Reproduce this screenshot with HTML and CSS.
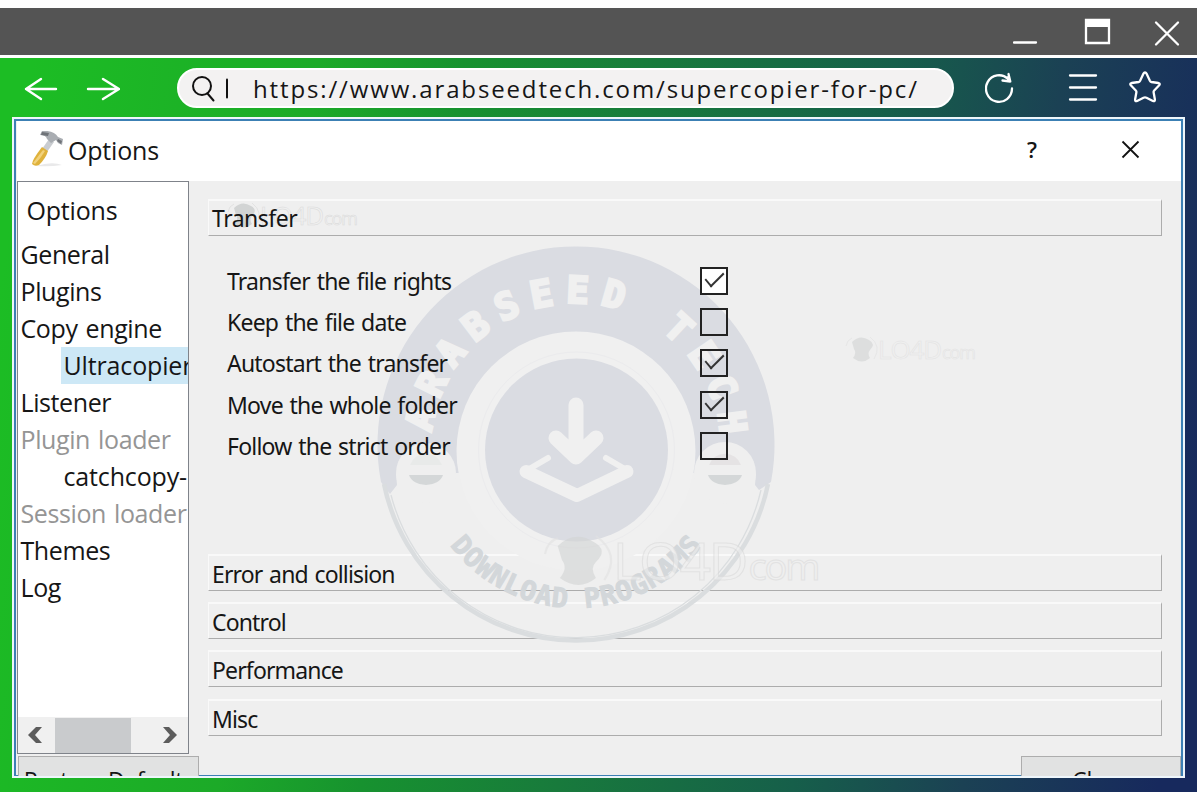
FILE: index.html
```
<!DOCTYPE html>
<html lang="en">
<head>
    <meta charset="UTF-8">
    <meta name="viewport" content="width=device-width, initial-scale=1.0">
    <title>Supercopier Options</title>
    <link rel="stylesheet" href="styles.css">
</head>
<body>
    <div class="browser">
        <div class="titlebar">
            <svg class="win-icons" width="170" height="47" viewBox="0 0 170 47" fill="none" stroke="#fff" stroke-width="2.3" stroke-linecap="round">
                <path d="M1 34.500h22"/>
                <path d="M73 12h23v23h-23z"/>
                <path d="M72 15.5h25" stroke-width="7" stroke-linecap="butt"/>
                <path d="M143 14.500l22 22M165 14.500l-22 22"/>
            </svg>
        </div>

        <div class="toolbar">
            <svg class="arrows" width="97" height="26" viewBox="0 0 97 26" fill="none" stroke="#fff" stroke-width="2.4" stroke-linecap="round" stroke-linejoin="round">
                <path d="M33 13H3M18 3L3 13l15 10"/>
                <path d="M65 13h31M80 3l16 10-16 10"/>
            </svg>
            <div class="address">
                <svg width="40" height="28" viewBox="0 0 40 28" fill="none" stroke="#111" stroke-width="2" stroke-linecap="round">
                    <circle cx="10" cy="12" r="9"/>
                    <path d="M15.500 19.500l6 7"/>
                    <path d="M35 5.500v18"/>
                </svg>
                <span class="url">https://www.arabseedtech.com/supercopier-for-pc/</span>
            </div>
            <svg class="tools" width="182" height="36" viewBox="0 0 182 36" fill="none" stroke="#fff" stroke-width="2.3" stroke-linecap="round" stroke-linejoin="round">
                <path d="M27 18.500a13 13.300 0 1 1-4-9.500"/>
                <path d="M23.500 4l1.800 7.500-7.800-1"/>
                <path d="M23.500 7v3.500" stroke-width="3"/>
                <path d="M85 5.500h26M85 17.500h26M85 29.500h26"/>
                <path d="M160 2.500q1 0 1.500 1l3.400 7.300q.5 1 1.500 1.200l7 1q2.200.5.8 2.300l-5 5.200q-.8.800-.6 1.800l1.300 7.200q.1 2.300-2 1.500l-6.400-3.300q-1.500-.7-3 0l-6.400 3.300q-2.100.8-2-1.500l1.300-7.200q.2-1-.6-1.800l-5-5.200q-1.400-1.800.8-2.300l7-1q1-.2 1.500-1.200l3.400-7.300q.5-1 1.500-1z"/>
            </svg>
        </div>

        <div class="dialog">
            <div class="dialog-title">
                <svg class="hammer" width="34" height="36" viewBox="0 0 34 36">
                    <path d="M6 35q16-5 26-1-12 2-26 1z" fill="#e9e9ea"/>
                    <path d="M19 8l5 3-7 10-5-3z" fill="#c9ccd0"/>
                    <path d="M12 16l6 4q-2 7-9 14-4 2-7-1 0-4 10-17z" fill="#dfb23c"/>
                    <path d="M13 19l2 1Q11 27 5 33l-2-1z" fill="#f2d27c"/>
                    <path d="M10 4l2-4q12-1 16 6l5 2-1 6-4-2-2-3-5 3-4-4q-1-4-7-4z" fill="#a9adb2"/>
                    <path d="M11 4l1-3 7 1-1 3zM28 8l4 2-1 3-4-3z" fill="#6f7378"/>
                </svg>
                <span class="caption">Options</span>
                <span class="help">?</span>
                <svg class="close" width="19" height="19" viewBox="0 0 19 19" stroke="#111" stroke-width="1.8">
                    <path d="M1.500 1.500l16 16M17.500 1.500l-16 16"/>
                </svg>
            </div>

            <div class="dialog-body">
                <div class="sidebar">
                    <div class="side-head">Options</div>
                    <ul>
                        <li>General</li>
                        <li>Plugins</li>
                        <li>Copy engine</li>
                        <li class="child selected">Ultracopier</li>
                        <li>Listener</li>
                        <li class="disabled">Plugin loader</li>
                        <li class="child">catchcopy-</li>
                        <li class="disabled">Session loader</li>
                        <li>Themes</li>
                        <li>Log</li>
                    </ul>
                    <div class="scrollbar">
                        <svg width="16" height="16" viewBox="0 0 16 16"><path d="M9 0h6L8 8l7 8H9L1 8z" fill="#5c5c5c"/></svg>
                        <div class="thumb"></div>
                        <svg width="16" height="16" viewBox="0 0 16 16"><path d="M7 0H1l7 8-7 8h6l8-8z" fill="#5c5c5c"/></svg>
                    </div>
                </div>

                <div class="main">
                    <div class="group first"><span>Transfer</span></div>
                    <div class="options">
                        <label><span>Transfer the file rights</span><i class="box on white"></i></label>
                        <label><span>Keep the file date</span><i class="box"></i></label>
                        <label><span>Autostart the transfer</span><i class="box on"></i></label>
                        <label><span>Move the whole folder</span><i class="box on"></i></label>
                        <label><span>Follow the strict order</span><i class="box"></i></label>
                    </div>
                    <div class="group"><span>Error and collision</span></div>
                    <div class="group"><span>Control</span></div>
                    <div class="group"><span>Performance</span></div>
                    <div class="group"><span>Misc</span></div>
                </div>
            </div>

            <div class="dialog-footer">
                <div class="btn restore">Restore Defaults</div>
                <div class="btn">Close</div>
            </div>
        </div>

        <!-- watermark badge, sits between the panels and their text -->
        <svg class="watermark" width="1200" height="800" viewBox="0 0 1200 800">
            <defs>
                <path id="arcTop" d="M431 448a145 145 0 0 1 290 0"/>
                <path id="arcBottom" d="M418 450a158 158 0 0 0 316 0"/>
                <g id="lo4d">
                    <path d="M6 6q8-8 17-2 7 4 1 10-3 3 0 8-8 7-17 0 4-5 1-9z" fill="#d2d4d4"/>
                    <path d="M0 10q1-6 6-8M24 1q12 9 4 22" fill="none" stroke="#e2e2e2"/>
                    <g class="lo4d-text">
                        <text x="32" y="23" font-size="26" textLength="64">LO4D</text>
                        <text x="96" y="23" font-size="18" textLength="34">com</text>
                    </g>
                </g>
            </defs>
            <path d="M390 494L381 482A198.500 198.500 0 1 1 771 482L759 490 755 485 756 473H396L397 485Z" fill="#dadce2"/>
            <circle cx="426" cy="473" r="30" fill="#efefef"/>
            <circle cx="725" cy="473" r="31" fill="#efefef"/>
            <g fill="none" stroke="#dadddf">
                <path d="M384 484A196 196 0 0 0 768 484" stroke-width="4.500"/>
                <path d="M391 495A190.500 190.500 0 0 0 761 490" stroke-width="1.300"/>
            </g>
            <circle cx="576" cy="451" r="119.500" fill="#f0f0f0"/>
            <circle cx="576.500" cy="450" r="98" fill="none" stroke="#ebebed"/>
            <circle cx="576.500" cy="450" r="91.500" fill="#dadce2"/>
            <g fill="none" stroke="#f0f0f0" stroke-linecap="round" stroke-linejoin="round">
                <path d="M576 405v50M556 438l20 19 20-19" stroke-width="15"/>
                <path d="M548 458l-24 14 53 25 53-25-24-14" stroke-width="6"/>
                <path d="M526 471.500l51 24 50-24" stroke-width="13"/>
            </g>
            <g>
                <path d="M410 465a17 17 0 0 1 32 0z" fill="#e8eae9"/>
                <path d="M409 475h34a17.500 13 0 0 1-34 0z" fill="#d4d7d8"/>
                <path d="M709 465a17 17 0 0 1 32 0z" fill="#e5e3e4"/>
                <path d="M708 475h34a17.500 13 0 0 1-34 0z" fill="#d4d7d8"/>
            </g>
            <text class="badge-top"><textPath href="#arcTop" startOffset="51.500%">ARABSEED TECH</textPath></text>
            <text class="badge-bottom"><textPath href="#arcBottom" startOffset="50%" textLength="292">DOWNLOAD PROGRAMS</textPath></text>
            <use href="#lo4d" x="228" y="202"/>
            <use href="#lo4d" x="846" y="336" opacity=".6"/>
            <use href="#lo4d" transform="translate(545 534) scale(2.120 2)" opacity=".6"/>
        </svg>
    </div>
</body>
</html>
```

FILE: styles.css
```
* {
    box-sizing: border-box;
}
body {
    margin: 0;
    background-color: #fefefe;
    font-family: "Open Sans", "Noto Sans", sans-serif;
    color: #161616;
    overflow: hidden;
}
.browser {
    width: 1197px;
    height: 784px;
    margin-top: 8px;
    background: linear-gradient(98deg, #1cbd24 3%, #1caa28 25%, #17922f 36%, #187a3c 51%, #165f4a 69%, #1b4154 82%, #17295d 97%);
}
.titlebar {
    height: 50px;
    background-color: #545454;
    border-bottom: 3px solid #fff;
    display: flex;
    justify-content: flex-end;
    padding-right: 14px;
}
.toolbar {
    height: 59px;
    display: flex;
    align-items: center;
    padding-left: 23px;
}
.arrows {
    margin-top: 3px;
}
.address {
    width: 777px;
    height: 40px;
    margin-left: 57px;
    border-radius: 20px;
    background-color: #f3f2f2;
    border: 2px solid #fff;
    display: flex;
    align-items: center;
    padding-left: 13px;
}
.url {
    margin: 2px 0 0 21px;
    font-size: 24px;
    letter-spacing: 1.86px;
    white-space: nowrap;
}
.tools {
    margin-left: 31px;
}
.dialog {
    width: 1173px;
    height: 661px;
    margin-left: 12px;
    border: 2px solid #eef6fb;
    background-color: #efefef;
    box-shadow: inset 1px 1px 0 1px #3c80b4, inset -1px 0 0 1px #3c80b4;
    padding: 2px 2px 0 3px;
    display: flex;
    flex-direction: column;
    overflow: hidden;
}
.dialog-title {
    flex: none;
    height: 60px;
    background-color: #fff;
    display: flex;
    align-items: center;
    padding: 0 41px 4px 13px;
}
.caption {
    margin: 1px auto 0 4px;
    font-size: 25px;
    letter-spacing: -0.2px;
}
.help {
    font-size: 22px;
    font-weight: 600;
    margin-right: 84px;
}
.dialog-body {
    flex: none;
    height: 573px;
    display: flex;
}
.sidebar {
    width: 172px;
    border: 1px solid #7f838a;
    background-color: #fff;
    font-size: 25px;
    letter-spacing: -0.4px;
    word-spacing: 2px;
    overflow: hidden;
    display: flex;
    flex-direction: column;
}
.side-head {
    height: 54px;
    line-height: 56px;
    padding-left: 8.5px;
    letter-spacing: -0.2px;
}
.sidebar ul {
    list-style: none;
    margin: 0;
    padding: 0;
    flex: 1;
}
.sidebar li {
    height: 37px;
    line-height: 37px;
    padding-left: 2.5px;
    white-space: nowrap;
}
.sidebar li.child {
    margin-left: 43px;
    letter-spacing: -0.15px;
}
.sidebar li.selected {
    background-color: #cde8f6;
}
.sidebar li.disabled {
    color: #959595;
}
.scrollbar {
    height: 36px;
    background-color: #f0f0f0;
    display: flex;
    align-items: center;
    justify-content: space-between;
    padding: 0 10px 0 9px;
}
.thumb {
    width: 76px;
    height: 35px;
    margin-right: 20px;
    background-color: #c9cbcd;
}
.main {
    flex: 1;
    padding: 18px 19px 0 19px;
    font-family: "Noto Sans", sans-serif;
    font-size: 23px;
    letter-spacing: -0.85px;
    word-spacing: 1.5px;
}
.group {
    height: 37px;
    line-height: 36px;
    margin-bottom: 11.2px;
    padding-left: 3px;
    border-top: 2px solid #f9f9f9;
    border-left: 1px solid #f9f9f9;
    border-right: 1.5px solid #acacac;
    border-bottom: 1.5px solid #acacac;
}
.group.first {
    line-height: 35px;
    letter-spacing: -0.5px;
    margin-bottom: 0;
}
.options {
    height: 318px;
    padding: 24px 0 0 19px;
    letter-spacing: -0.78px;
}
.options label {
    width: 501px;
    height: 41.3px;
    display: flex;
    align-items: center;
    justify-content: space-between;
}
.box {
    width: 28px;
    height: 28px;
    border: 2px solid #222;
}
.box.white {
    background-color: #fff;
}
.box.on::after {
    content: "";
    position: absolute;
    left: 3px;
    top: 3px;
    width: 17px;
    height: 8px;
    border-left: 2px solid #333;
    border-bottom: 2px solid #333;
    transform: rotate(-45deg) skewX(-5deg);
}
/* keeps text and boxes above the badge */
.group span, .options span, .box {
    position: relative;
    z-index: 2;
}
.dialog-footer {
    flex: none;
    display: flex;
    justify-content: space-between;
    margin-top: 2px;
    padding-left: 1px;
}
.btn {
    width: 160px;
    height: 40px;
    line-height: 46px;
    text-align: center;
    font-size: 23px;
    background-color: #e1e2e2;
    border: 1px solid #adadad;
}
.btn.restore {
    width: 181px;
    white-space: nowrap;
    letter-spacing: -0.5px;
}
.watermark {
    position: absolute;
    left: 0;
    top: 0;
    z-index: 1;
}
.badge-top {
    font-family: "DejaVu Sans Mono", monospace;
    font-weight: bold;
    font-size: 37px;
    letter-spacing: 11.4px;
    text-anchor: middle;
    fill: #f0f0f0;
    stroke: #f0f0f0;
    stroke-width: 2.8;
}
.badge-bottom {
    font-family: "DejaVu Sans Mono", monospace;
    font-weight: bold;
    font-size: 27px;
    text-anchor: middle;
    fill: #d3d7da;
    stroke: #d3d7da;
    stroke-width: 1;
}
.lo4d-text {
    font-family: "Open Sans", sans-serif;
    fill: #efefef;
    stroke: #dadada;
    stroke-width: .5;
}
```
